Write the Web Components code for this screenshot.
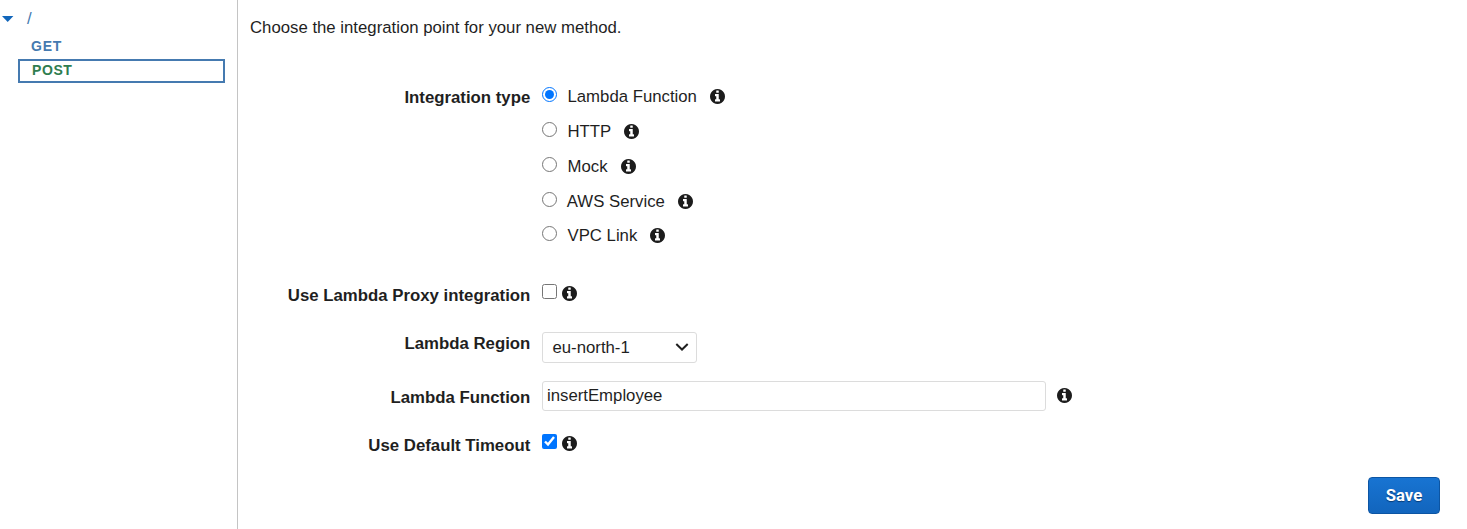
<!DOCTYPE html>
<html lang="en">
<head>
<meta charset="utf-8">
<title>Method setup</title>
<style>
body{margin:0;background:#fff;color:#1f1f1f;font:16.75px/20px "Liberation Sans",Arial,sans-serif}
</style>
</head>
<body>
<method-setup></method-setup>
<script>
const define = (name, html) => customElements.define(name, class extends HTMLElement {
  constructor() {
    super();
    this.attachShadow({mode: 'open'}).innerHTML = html;
  }
});

define('info-icon', `<style>:host{display:block;width:15px;height:15px;flex:none}svg{display:block}</style>
<svg width="15" height="15" viewBox="0 128 1536 1536" fill="#1c1c1c"><path d="M1024 1376v-160q0-14-9-23t-23-9h-96v-512q0-14-9-23t-23-9h-320q-14 0-23 9t-9 23v160q0 14 9 23t23 9h96v320h-96q-14 0-23 9t-9 23v160q0 14 9 23t23 9h448q14 0 23-9t9-23zm-128-896v-160q0-14-9-23t-23-9h-192q-14 0-23 9t-9 23v160q0 14 9 23t23 9h192q14 0 23-9t9-23zm640 416q0 209-103 385.5t-279.5 279.5-385.5 103-385.5-103-279.5-279.5-103-385.5 103-385.5 279.5-279.5 385.5-103 385.5 103 279.5 279.5 103 385.5z"/></svg>`);

define('resource-tree', `<style>
:host{display:block;box-sizing:border-box;width:238px;border-right:1px solid #c4c4c4;padding-top:9px;color:#457ab0}
.root{display:flex;align-items:center;height:20px;padding-left:2px}
.root svg{margin-right:13px}
.method{box-sizing:border-box;height:24px;margin:0 12px 0 18px;border:2px solid transparent;padding-left:11px;font-weight:700;font-size:14px;line-height:19px;letter-spacing:.8px}
.get{margin-top:6px}
.post{border-color:#457ab0;color:#2f7d4f;padding-left:12px;letter-spacing:.6px}
</style>
<div class="root"><svg width="12" height="6" viewBox="0 0 12 6"><path d="M0 0H11.4L5.7 6Z" fill="#1166bb"/></svg><span>/</span></div>
<div class="method get">GET</div>
<div class="method post">POST</div>`);

define('form-row', `<style>
:host{display:flex;align-items:flex-start}
.label{width:292.3px;text-align:right;font-weight:700;font-size:16.8px;margin-right:11.7px;padding-top:var(--label-top,0);flex:none}
</style><div class="label"><slot name="label"></slot></div><slot></slot>`);

customElements.define('choice-option', class extends HTMLElement {
  constructor() {
    super();
    const type = this.getAttribute('type');
    this.attachShadow({mode: 'open'}).innerHTML = `<style>
:host{display:flex;align-items:flex-start;height:34.75px}
input{appearance:auto;margin:0;width:15px;height:15px;flex:none}
span{padding:0 13px 0 10.5px;line-height:20px}
info-icon{margin-top:2px}
:host([tight]) span{padding-left:9.8px}
:host([type=checkbox]){height:35px}
:host([type=checkbox]) span{padding:0 5px 0 0}
</style><input type="${type}" ${this.hasAttribute('checked') ? 'checked' : ''}><span><slot></slot></span><info-icon></info-icon>`;
  }
});

define('select-box', `<style>
:host{display:flex;box-sizing:border-box;width:155px;height:31px;border:1px solid #dcdcdc;border-radius:3px;padding:0 7px 0 9.5px;align-items:center;justify-content:space-between}
span{padding-top:1px}
</style><span><slot></slot></span><svg width="14" height="10" viewBox="0 0 14 10" fill="none" stroke="#1f1f1f" stroke-width="2"><path d="M1.3 2L7 7.5L12.7 2"/></svg>`);

define('text-box', `<style>
:host{display:block;box-sizing:border-box;width:504px;height:30px;border:1px solid #dcdcdc;border-radius:3px;padding:4px;margin-right:11px}
</style><slot></slot>`);

define('save-button', `<style>
:host{display:block}
button{display:block;box-sizing:border-box;width:72px;height:37px;border:1px solid #0c55a3;border-radius:4px;background:linear-gradient(#1874d2,#1265bd);color:#fff;font:700 16.7px/20px Roboto,sans-serif;padding:1px 0 0;text-shadow:0 1px 1px #073c78}
</style><button><slot></slot></button>`);

define('method-form', `<style>
:host{display:block;flex:1;padding:18px 27px 0 12px}
form-row{margin-left:-12px}
.type{margin-top:49.3px;--label-top:1px}
.proxy{margin-top:22.95px;--label-top:2px}
.region{margin-top:13px;--label-top:2px}
.function{margin-top:18px;--label-top:7px}
.function info-icon{margin-top:7px}
.timeout{margin-top:23px;--label-top:2px}
.actions{display:flex;justify-content:flex-end;margin-top:8px}
</style>
<div>Choose the integration point for your new method.</div>
<form-row class="type"><span slot="label">Integration type</span><div class="options">
<choice-option type="radio" checked>Lambda Function</choice-option>
<choice-option type="radio">HTTP</choice-option>
<choice-option type="radio">Mock</choice-option>
<choice-option type="radio" tight>AWS Service</choice-option>
<choice-option type="radio">VPC Link</choice-option></div></form-row>
<form-row class="proxy"><span slot="label">Use Lambda Proxy integration</span><choice-option type="checkbox"></choice-option></form-row>
<form-row class="region"><span slot="label">Lambda Region</span><select-box>eu-north-1</select-box></form-row>
<form-row class="function"><span slot="label">Lambda Function</span><text-box>insertEmployee</text-box><info-icon></info-icon></form-row>
<form-row class="timeout"><span slot="label">Use Default Timeout</span><choice-option type="checkbox" checked></choice-option></form-row>
<div class="actions"><save-button>Save</save-button></div>`);

define('method-setup', `<style>:host{display:flex;height:529px;overflow:hidden}</style><resource-tree></resource-tree><method-form></method-form>`);
</script>
</body>
</html>
